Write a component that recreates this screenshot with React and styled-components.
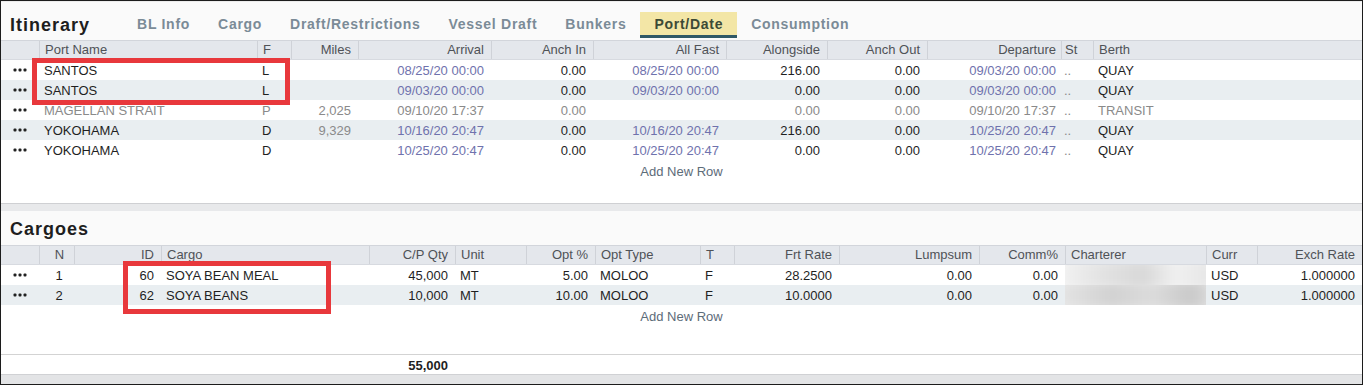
import React from "react";
import styled, { createGlobalStyle } from "styled-components";

const GlobalStyle = createGlobalStyle`
  html, body {
    margin: 0;
    padding: 0;
    background: #ffffff;
  }
  body {
    font-family: "Liberation Sans", Arial, sans-serif;
  }
`;

const TABS = [
  "BL Info",
  "Cargo",
  "Draft/Restrictions",
  "Vessel Draft",
  "Bunkers",
  "Port/Date",
  "Consumption",
];

const ITINERARY_COLUMNS = [
  { key: "menu", label: "", width: "38px" },
  { key: "port", label: "Port Name", width: "218px" },
  { key: "f", label: "F", width: "34px" },
  { key: "miles", label: "Miles", width: "67px", align: "right", tone: "muted" },
  { key: "arrival", label: "Arrival", width: "133px", align: "right", tone: "date" },
  { key: "anchIn", label: "Anch In", width: "102px", align: "right" },
  { key: "allFast", label: "All Fast", width: "133px", align: "right", tone: "date" },
  { key: "alongside", label: "Alongside", width: "101px", align: "right" },
  { key: "anchOut", label: "Anch Out", width: "100px", align: "right" },
  { key: "departure", label: "Departure", width: "134px", align: "right", tone: "date", pad: 5 },
  { key: "st", label: "St", width: "32px", tone: "muted", pad: 3 },
  { key: "berth", label: "Berth", width: "1fr" },
];

const ITINERARY_ROWS = [
  {
    port: "SANTOS", f: "L", miles: "", arrival: "08/25/20 00:00", anchIn: "0.00",
    allFast: "08/25/20 00:00", alongside: "216.00", anchOut: "0.00",
    departure: "09/03/20 00:00", st: "..", berth: "QUAY",
  },
  {
    port: "SANTOS", f: "L", miles: "", arrival: "09/03/20 00:00", anchIn: "0.00",
    allFast: "09/03/20 00:00", alongside: "0.00", anchOut: "0.00",
    departure: "09/03/20 00:00", st: "..", berth: "QUAY",
  },
  {
    port: "MAGELLAN STRAIT", f: "P", miles: "2,025", arrival: "09/10/20 17:37", anchIn: "0.00",
    allFast: "", alongside: "0.00", anchOut: "0.00",
    departure: "09/10/20 17:37", st: "..", berth: "TRANSIT", passing: true,
  },
  {
    port: "YOKOHAMA", f: "D", miles: "9,329", arrival: "10/16/20 20:47", anchIn: "0.00",
    allFast: "10/16/20 20:47", alongside: "216.00", anchOut: "0.00",
    departure: "10/25/20 20:47", st: "..", berth: "QUAY",
  },
  {
    port: "YOKOHAMA", f: "D", miles: "", arrival: "10/25/20 20:47", anchIn: "0.00",
    allFast: "10/25/20 20:47", alongside: "0.00", anchOut: "0.00",
    departure: "10/25/20 20:47", st: "..", berth: "QUAY",
  },
];

const CARGO_COLUMNS = [
  { key: "menu", label: "", width: "38px" },
  { key: "n", label: "N", width: "35px", align: "center" },
  { key: "id", label: "ID", width: "87px", align: "right" },
  { key: "cargo", label: "Cargo", width: "208px" },
  { key: "qty", label: "C/P Qty", width: "86px", align: "right" },
  { key: "unit", label: "Unit", width: "71px" },
  { key: "opt", label: "Opt %", width: "69px", align: "right" },
  { key: "optType", label: "Opt Type", width: "105px" },
  { key: "t", label: "T", width: "34px" },
  { key: "frt", label: "Frt Rate", width: "105px", align: "right" },
  { key: "lump", label: "Lumpsum", width: "140px", align: "right" },
  { key: "comm", label: "Comm%", width: "86px", align: "right" },
  { key: "charterer", label: "Charterer", width: "141px" },
  { key: "curr", label: "Curr", width: "51px" },
  { key: "exch", label: "Exch Rate", width: "1fr", align: "right" },
];

const CARGO_ROWS = [
  {
    n: "1", id: "60", cargo: "SOYA BEAN MEAL", qty: "45,000", unit: "MT", opt: "5.00",
    optType: "MOLOO", t: "F", frt: "28.2500", lump: "0.00", comm: "0.00",
    charterer: "blur", curr: "USD", exch: "1.000000",
  },
  {
    n: "2", id: "62", cargo: "SOYA BEANS", qty: "10,000", unit: "MT", opt: "10.00",
    optType: "MOLOO", t: "F", frt: "10.0000", lump: "0.00", comm: "0.00",
    charterer: "blur", curr: "USD", exch: "1.000000",
  },
];

const templateOf = (columns) => columns.map((c) => c.width).join(" ");

const RowMenu = () => (
  <svg width="15" height="4" viewBox="0 0 15 4">
    <rect x="0.5" y="0.5" width="3" height="3" rx="1" fill="#222" />
    <rect x="5.5" y="0.5" width="3" height="3" rx="1" fill="#222" />
    <rect x="10.5" y="0.5" width="3" height="3" rx="1" fill="#222" />
  </svg>
);

const renderCell = (col, row, rowIndex) => {
  if (col.key === "menu") {
    return (
      <MenuCell key={col.key}>
        <RowMenu />
      </MenuCell>
    );
  }
  if (row[col.key] === "blur") {
    return (
      <BlurCell key={col.key}>
        <Smudge $variant={rowIndex} />
      </BlurCell>
    );
  }
  let tone = col.tone || "normal";
  if (row.passing) tone = "muted";
  return (
    <Cell key={col.key} $align={col.align} $pad={col.pad} $tone={tone}>
      {row[col.key]}
    </Cell>
  );
};

const DataGrid = ({ columns, rows, height, total }) => {
  const template = templateOf(columns);
  return (
    <GridArea $height={height}>
      <HeaderRow $template={template}>
        {columns.map((col) => (
          <HeaderCell key={col.key} $align={col.align} $pad={col.pad}>
            {col.label}
          </HeaderCell>
        ))}
      </HeaderRow>
      {rows.map((row, i) => (
        <DataRow key={i} $template={template} $striped={i % 2 === 1}>
          {columns.map((col) => renderCell(col, row, i))}
        </DataRow>
      ))}
      <AddRow>Add New Row</AddRow>
      {total && (
        <TotalRow $template={template}>
          {columns.map((col) => (
            <Cell key={col.key} $align={col.align} $pad={col.pad} $bold>
              {total[col.key] || ""}
            </Cell>
          ))}
        </TotalRow>
      )}
    </GridArea>
  );
};

export default function App() {
  return (
    <>
      <GlobalStyle />
      <Frame>
        <TitleBar>
          <Title>Itinerary</Title>
          <TabList>
            {TABS.map((tab) => (
              <Tab key={tab} $active={tab === "Port/Date"}>
                {tab}
              </Tab>
            ))}
          </TabList>
        </TitleBar>
        <DataGrid columns={ITINERARY_COLUMNS} rows={ITINERARY_ROWS} height={163} />
        <Divider />
        <TitleBar $compact>
          <Title>Cargoes</Title>
        </TitleBar>
        <DataGrid
          columns={CARGO_COLUMNS}
          rows={CARGO_ROWS}
          height={129}
          total={{ qty: "55,000" }}
        />
        <BottomBand />

        <Highlight $left={31} $top={57} $width={258} $height={47} />
        <Highlight $left={122} $top={260} $width={208} $height={53} />
      </Frame>
    </>
  );
}

const Frame = styled.div`
  position: relative;
  width: 1363px;
  height: 385px;
  box-sizing: border-box;
  border: 1px solid #1c1c1c;
  background: #ffffff;
  overflow: hidden;
  display: flex;
  flex-direction: column;
  font-size: 13px;
  color: #222222;
`;

const TitleBar = styled.div`
  height: ${(p) => (p.$compact ? "34px" : "39px")};
  box-sizing: border-box;
  display: flex;
  align-items: ${(p) => (p.$compact ? "center" : "flex-end")};
  padding: ${(p) => (p.$compact ? "3px 0 0 9px" : "0 0 2px 9px")};
  background: #fafafa;
  border-top: ${(p) => (p.$compact ? "0" : "1px solid #ececec")};
`;

const Title = styled.div`
  font-size: 18px;
  font-weight: 700;
  letter-spacing: 1px;
  color: #1e1e1e;
  line-height: 22px;
  margin-bottom: 2px;
`;

const TabList = styled.div`
  display: flex;
  margin-left: 33px;
`;

const Tab = styled.div`
  height: 26px;
  box-sizing: border-box;
  padding: 0 14px;
  line-height: 24px;
  font-size: 14px;
  font-weight: 700;
  letter-spacing: 0.72px;
  color: ${(p) => (p.$active ? "#3c4a36" : "#7b8b97")};
  background: ${(p) => (p.$active ? "#f3e6a6" : "transparent")};
  border-bottom: 3px solid ${(p) => (p.$active ? "#2f5866" : "transparent")};
  white-space: nowrap;
`;

const GridArea = styled.div`
  height: ${(p) => p.$height}px;
  display: flex;
  flex-direction: column;
  background: #ffffff;
`;

const HeaderRow = styled.div`
  display: grid;
  grid-template-columns: ${(p) => p.$template};
  height: 20px;
  box-sizing: border-box;
  background: #e4e7ec;
  border-top: 1px solid #d2d5db;
  border-bottom: 1px solid #d7dae0;
`;

const HeaderCell = styled.div`
  line-height: 18px;
  color: #4f5257;
  white-space: nowrap;
  overflow: hidden;
  text-align: ${(p) => p.$align || "left"};
  padding: ${(p) =>
    p.$align === "right" ? `0 ${p.$pad ?? 7}px 0 0` : `0 0 0 ${p.$pad ?? 5}px`};
  & + & {
    border-left: 1px solid #cfd2d8;
  }
`;

const DataRow = styled.div`
  display: grid;
  grid-template-columns: ${(p) => p.$template};
  height: 20px;
  background: ${(p) => (p.$striped ? "#e9eef1" : "#ffffff")};
`;

const TotalRow = styled.div`
  display: grid;
  grid-template-columns: ${(p) => p.$template};
  height: 20px;
  box-sizing: border-box;
  margin-top: auto;
  border-top: 1px solid #d3d3d3;
`;

const toneColor = {
  normal: "#1f1f1f",
  date: "#6f72ad",
  muted: "#8a8a8a",
};

const Cell = styled.div`
  line-height: 21px;
  white-space: nowrap;
  overflow: hidden;
  color: ${(p) => toneColor[p.$tone] || toneColor.normal};
  font-weight: ${(p) => (p.$bold ? 700 : 400)};
  text-align: ${(p) => p.$align || "left"};
  padding: ${(p) =>
    p.$align === "right" ? `0 ${p.$pad ?? 7}px 0 0` : `0 0 0 ${p.$pad ?? 5}px`};
`;

const MenuCell = styled.div`
  display: flex;
  align-items: center;
  padding-left: 12px;
`;

const BlurCell = styled.div`
  position: relative;
  overflow: hidden;
  background: #f7f7f7;
`;

const Smudge = styled.div`
  position: absolute;
  inset: -6px -10px;
  filter: blur(6px);
  background: ${(p) =>
    p.$variant === 0
      ? "linear-gradient(90deg, #f4f4f4 0%, #e2e2e2 30%, #d8d8d8 55%, #f0f0f0 75%, #e4e4e4 100%)"
      : "linear-gradient(90deg, #e6e6e6 0%, #d2d2d2 35%, #dcdcdc 60%, #c9c9c9 85%, #e0e0e0 100%)"};
`;

const AddRow = styled.div`
  height: 24px;
  line-height: 24px;
  text-align: center;
  color: #5d6c79;
`;

const Divider = styled.div`
  height: 8px;
  box-sizing: border-box;
  background: #e8e9eb;
  border-top: 1px solid #cfd0d3;
`;

const BottomBand = styled.div`
  flex: 1;
  background: #e3e4e6;
  border-top: 1px solid #d0d1d4;
`;

const Highlight = styled.div`
  position: absolute;
  left: ${(p) => p.$left}px;
  top: ${(p) => p.$top}px;
  width: ${(p) => p.$width}px;
  height: ${(p) => p.$height}px;
  box-sizing: border-box;
  border: 5px solid #e8383c;
  pointer-events: none;
`;
